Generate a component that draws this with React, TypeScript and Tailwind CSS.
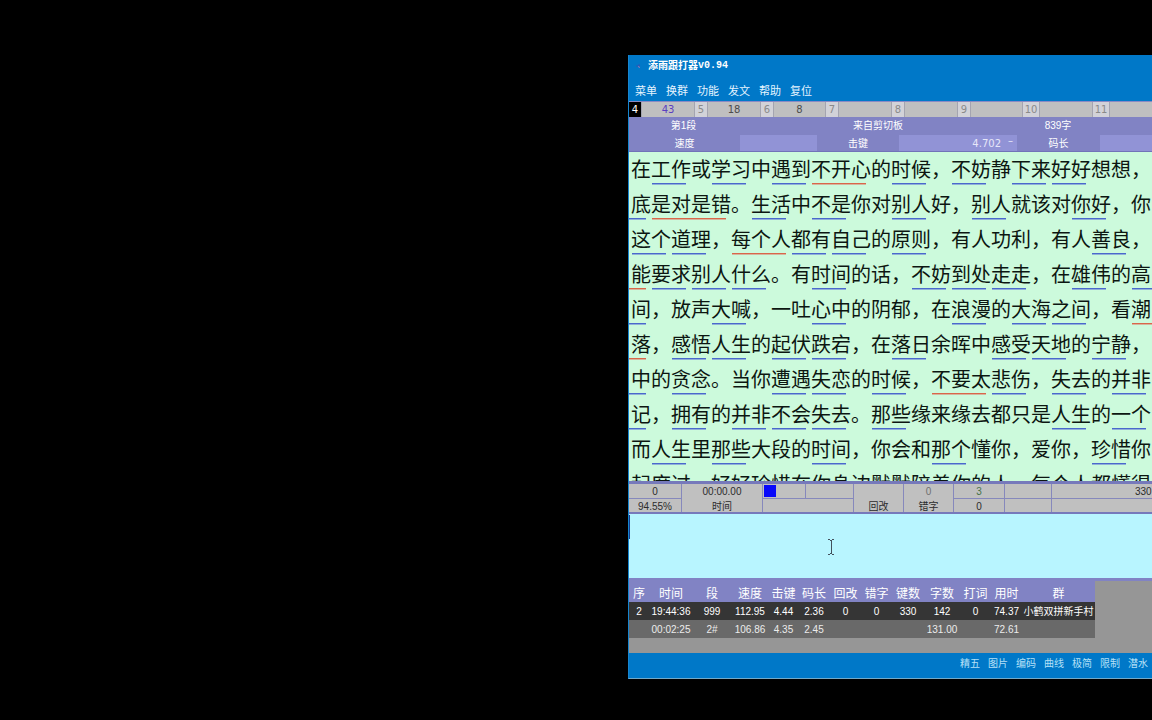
import { Fragment } from "react";

type Mark = "blue" | "red" | "none";
type Segment = { text: string; mark: Mark; edge: string };

// "[..]" marks a two-character word, "{..}" a longer phrase or one carried over a line.
const passage = [
  "在[工作]或[学习]中[遇到]{不开心}的[时候]，[不妨]静[下来][好好]想想，",
  "[底]{是对是错}。[生活]中[不是]你对[别人]好，[别人]就该对[你好]，你",
  "[这个][道理]，{每个人}[都有][自己]的[原则]，有人功利，有人[善良]，",
  "{能}[要求][别人][什么]。有[时间]的话，[不妨][到处][走走]，在[雄伟]的[高]",
  "[间]，放声[大喊]，一吐[心中]的阴郁，在[浪漫]的[大海][之间]，看{潮}",
  "{落}，[感悟][人生]的[起伏][跌宕]，在[落日]余晖中[感受][天地]的[宁静]，",
  "[中]的[贪念]。当你[遭遇][失恋]的[时候]，{不要太}[悲伤]，[失去]的[并非]",
  "[记]，[拥有]的[并非][不会][失去]。[那些]缘来缘去都只是[人生]的[一个]",
  "而[人生]里[那些]大段的[时间]，你会和[那个]懂你，爱你，[珍惜]你",
  "起度过，好好珍惜在你身边默默陪着你的人，每个人都懂得",
];

function parse(line: string): Segment[] {
  return (line.match(/\[[^\]]+\]|\{[^}]+\}|[^[{]+/g) ?? []).map((part, i) => {
    const mark: Mark = part[0] === "[" ? "blue" : part[0] === "{" ? "red" : "none";
    const text = mark === "none" ? part : part.slice(1, -1);
    // A single marked character belongs to a word that is split across two lines.
    const single = mark !== "none" && text.length === 1;
    const edge = !single ? "ml-px mr-[5px]" : i === 0 ? "-ml-0.5 mr-[5px]" : "ml-px -mr-1";
    return { text, mark, edge };
  });
}

const barColor: Record<Mark, string> = {
  blue: "border-t-[#4a68cc] border-b-[#8fb0d8]",
  red: "border-t-[#d9664a] border-b-[#d6b49c]",
  none: "border-transparent",
};

function Passage() {
  return (
    <article className="h-[329px] overflow-hidden bg-[#ccfadc] pt-[3px] pl-0.5 font-['Noto_Sans_CJK_SC','Noto_Sans',sans-serif] text-[20px] text-[#0c1611]">
      {passage.map((line) => (
        <p key={line} className="flex h-[35px] whitespace-nowrap">
          {parse(line).map((s, i) => (
            <span key={i} className="flex shrink-0 flex-col">
              <span className="h-7 leading-7">{s.text}</span>
              <span className={`h-[2px] border-y ${s.edge} ${barColor[s.mark]}`} />
            </span>
          ))}
        </p>
      ))}
    </article>
  );
}

const menu = ["菜单", "换群", "功能", "发文", "帮助", "复位"];
const ruler = [
  { n: "4", v: "43", tag: "w-3 bg-black text-white", cell: "w-[54px] text-[#5a3fc0]" },
  { n: "5", v: "18", tag: "w-3 bg-[#d2d2d8] text-[#8a8a8a]", cell: "w-[54px] text-[#4c4c4c]" },
  { n: "6", v: "8", tag: "w-3 bg-[#d2d2d8] text-[#8a8a8a]", cell: "w-[53px] text-[#4c4c4c]" },
  { n: "7", v: "", tag: "w-3 bg-[#d2d2d8] text-[#8a8a8a]", cell: "w-[54px]" },
  { n: "8", v: "", tag: "w-3 bg-[#d2d2d8] text-[#8a8a8a]", cell: "w-[54px]" },
  { n: "9", v: "", tag: "w-3 bg-[#d2d2d8] text-[#8a8a8a]", cell: "w-[53px]" },
  { n: "10", v: "", tag: "w-4 bg-[#d2d2d8] text-[#8a8a8a]", cell: "w-[54px]" },
  { n: "11", v: "", tag: "w-4 bg-[#d2d2d8] text-[#8a8a8a]", cell: "w-[54px]" },
];

function Ruler() {
  return (
    <div className="flex h-4 overflow-hidden border-t border-[#8a8ac4] bg-[#bfbfc0] font-['DejaVu_Sans',sans-serif] text-[10px] leading-4">
      {ruler.map((r) => (
        <Fragment key={r.n}>
          <span className={`shrink-0 text-center ${r.tag}`}>{r.n}</span>
          <span className={`shrink-0 border-x border-[#a4a4b0] text-center ${r.cell}`}>{r.v}</span>
        </Fragment>
      ))}
    </div>
  );
}

function Info() {
  return (
    <section className="h-[35px] overflow-hidden border-b border-[#7173b8] bg-[#8183c4] text-[10px] text-white">
      <div className="flex h-[18px] leading-[18px]">
        <span className="w-[109px] shrink-0 text-center">第1段</span>
        <span className="w-[280px] shrink-0 text-center">来自剪切板</span>
        <span className="w-20 shrink-0 text-center">839字</span>
      </div>
      <div className="flex h-4 leading-[18px]">
        <span className="w-[111px] shrink-0 text-center">速度</span>
        <span className="w-[77px] shrink-0 bg-[#9193d6]" />
        <span className="w-[82px] shrink-0 text-center">击键</span>
        <span className="flex w-[118px] shrink-0 justify-end gap-[7px] bg-[#9193d6] pr-1 font-['DejaVu_Sans',sans-serif] text-[10px] leading-[18px] text-[#e6e6f8]">
          <span>4.702</span>
          <span className="leading-3">–</span>
        </span>
        <span className="w-[83px] shrink-0 text-center">码长</span>
        <span className="flex-1 bg-[#9193d6]" />
      </div>
    </section>
  );
}

const line = "border-[#8688bc]";

function Stats() {
  return (
    <section className="flex h-[33px] overflow-hidden border-t-[3px] border-b-2 border-[#7679bb] bg-[#c0c0c0] text-[10px] leading-4 text-[#2c2c2c]">
      <div className={`w-[53px] shrink-0 border-r text-center ${line}`}>
        <div className={`h-[15px] border-b ${line}`}>0</div>
        <div>94.55%</div>
      </div>
      <div className={`w-[81px] shrink-0 border-r text-center ${line}`}>
        <div className="h-[15px]">00:00.00</div>
        <div>时间</div>
      </div>
      <div className={`w-[91px] shrink-0 border-r ${line}`}>
        <div className={`flex h-[15px] border-b ${line}`}>
          <span className="mt-px ml-px h-3 w-3 bg-[#0808fa]" />
          <span className={`w-[30px] border-r ${line}`} />
        </div>
      </div>
      <div className={`w-[50px] shrink-0 border-r text-center ${line}`}>
        <div className="h-[15px]" />
        <div>回改</div>
      </div>
      <div className={`w-[50px] shrink-0 border-r text-center ${line}`}>
        <div className="h-[15px] text-[#707070]">0</div>
        <div>错字</div>
      </div>
      <div className={`w-[51px] shrink-0 border-r text-center ${line}`}>
        <div className={`h-[15px] border-b text-[#47734a] ${line}`}>3</div>
        <div>0</div>
      </div>
      <div className={`w-[47px] shrink-0 border-r ${line}`}>
        <div className={`h-[15px] border-b ${line}`} />
      </div>
      <div className="flex-1">
        <div className={`h-[15px] border-b pl-[83px] ${line}`}>330</div>
      </div>
    </section>
  );
}

const columns = [
  { name: "序", w: "w-5" },
  { name: "时间", w: "w-11" },
  { name: "段", w: "w-[38px]" },
  { name: "速度", w: "w-[38px]" },
  { name: "击键", w: "w-[29px]" },
  { name: "码长", w: "w-8" },
  { name: "回改", w: "w-[31px]" },
  { name: "错字", w: "w-[31px]" },
  { name: "键数", w: "w-8" },
  { name: "字数", w: "w-9" },
  { name: "打词", w: "w-[31px]" },
  { name: "用时", w: "w-[31px]" },
  { name: "群", w: "w-[73px]" },
];
const results = [
  ["2", "19:44:36", "999", "112.95", "4.44", "2.36", "0", "0", "330", "142", "0", "74.37", "小鹤双拼新手村"],
  ["", "00:02:25", "2#", "106.86", "4.35", "2.45", "", "", "", "131.00", "", "72.61", ""],
];

function Results() {
  return (
    <section className="h-[75px] overflow-hidden border-t-[3px] border-[#8183c4] bg-[#969696]">
      <table className="w-[466px] table-fixed border-collapse text-center whitespace-nowrap text-white">
        <thead className="bg-[#8183c4]">
          <tr className="h-[21px]">
            {columns.map((c) => (
              <th key={c.name} scope="col" className={`p-0 pt-[5px] text-[12px] leading-4 font-normal ${c.w}`}>{c.name}</th>
            ))}
          </tr>
        </thead>
        <tbody className="text-[10px] leading-4">
          {results.map((r, i) => (
            <tr key={i} className={`h-[18px] ${i === 0 ? "bg-[#353535]" : "bg-[#696969]"}`}>
              {r.map((v, j) => (
                <td key={j} className={`p-0 pt-0.5 ${i === 1 ? "text-[#ececec]" : ""}`}>{v}</td>
              ))}
            </tr>
          ))}
        </tbody>
      </table>
    </section>
  );
}

const options = ["精五", "图片", "编码", "曲线", "极简", "限制", "潜水"];

export default function App() {
  return (
    <div className="flex min-h-screen overflow-hidden bg-black pt-[55px] font-['Liberation_Sans','Noto_Sans_CJK_SC',sans-serif]">
      <main className="ml-[628px] flex min-w-0 flex-1 flex-col self-start overflow-hidden border-b border-l border-b-[#72a9c8] border-l-[#1685cf] bg-[#0078c8]">
        <header className="h-[46px] text-white">
          <div className="flex h-[22px] items-center pl-1.5">
            <svg className="mr-[5px] h-2 w-2" viewBox="0 0 8 8" aria-hidden="true">
              <path d="M1 4h4M4 2v3" stroke="#2f55b4" strokeWidth="1" />
              <path d="M3 4.5l2 1" stroke="#9a7fb4" strokeWidth="1" />
            </svg>
            <h1 className="flex items-center text-[10px] leading-5 font-bold">
              <span>添雨跟打器</span>
              <span className="font-['Liberation_Mono',monospace]">v0.94</span>
            </h1>
          </div>
          <nav className="flex h-6 gap-[9px] pt-1 pl-1.5">
            {menu.map((m) => (
              <button key={m} type="button" className="h-5 text-[11px] leading-5 text-[#e5f4ff]">{m}</button>
            ))}
          </nav>
        </header>
        <Ruler />
        <Info />
        <Passage />
        <Stats />
        <div className="relative h-16">
          <textarea aria-label="跟打输入" className="block h-full w-full resize-none border-0 bg-[#b8f5ff] p-1 text-[20px] outline-none" />
          <span className="absolute top-px left-0 h-6 w-px bg-[#153d8c]" />
          <svg className="absolute top-[25px] left-[199px] h-4 w-[6px]" viewBox="0 0 6 16" fill="none" stroke="#42505c" aria-hidden="true">
            <path d="M0 .5h2M4 .5h2M2 1.5h2M3.5 1v14M2 14.5h2M0 15.5h2M4 15.5h2" />
          </svg>
        </div>
        <Results />
        <footer className="flex h-[25px] gap-2 overflow-hidden pl-[331px]">
          {options.map((o) => (
            <button key={o} type="button" className="h-[22px] shrink-0 text-[10px] leading-[22px] text-[#b5e0f7]">{o}</button>
          ))}
        </footer>
      </main>
    </div>
  );
}
